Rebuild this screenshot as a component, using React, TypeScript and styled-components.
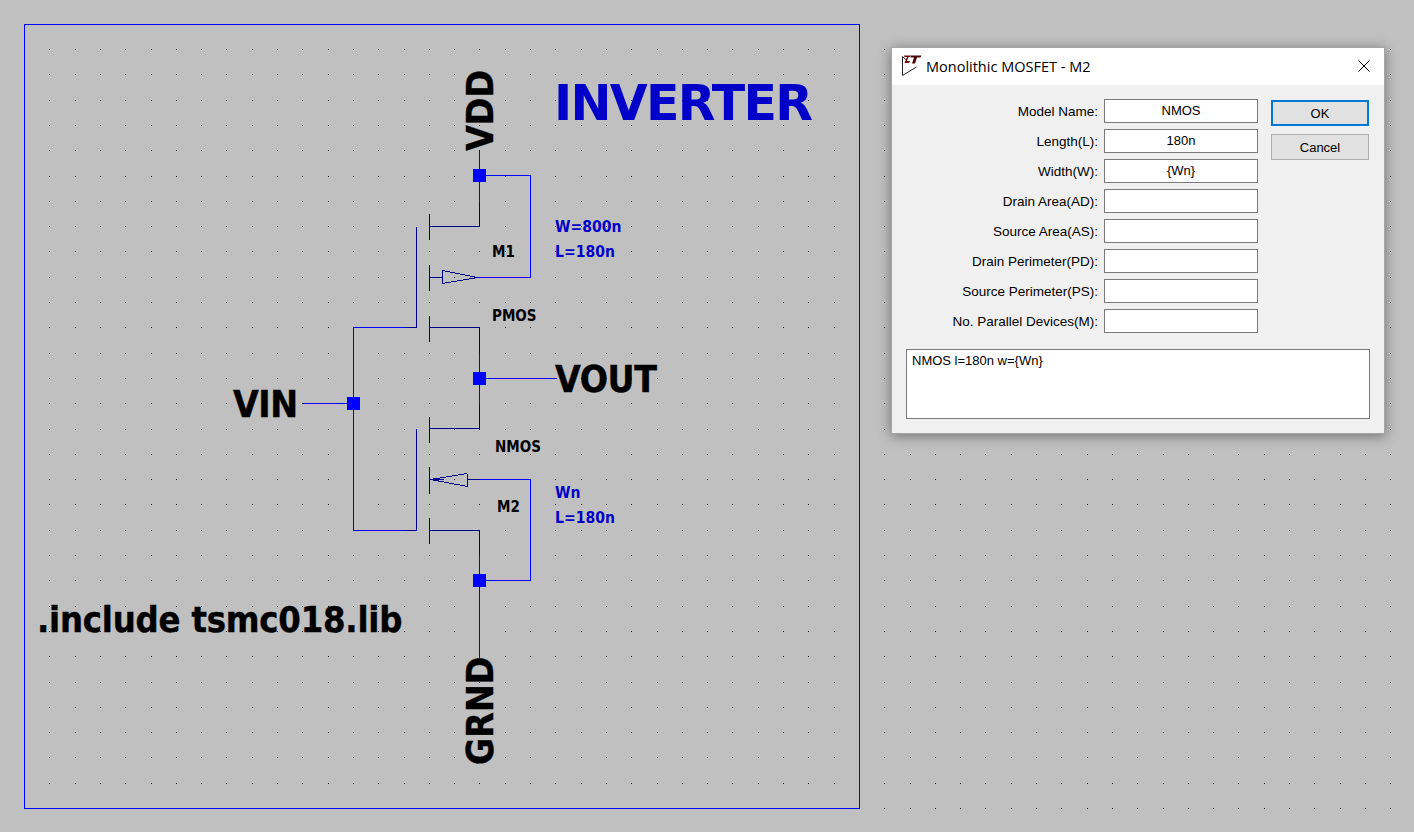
import React from "react";
import styled, { createGlobalStyle } from "styled-components";

const GlobalStyle = createGlobalStyle`
  html, body {
    margin: 0;
    padding: 0;
    background: #c0c0c0;
    overflow: hidden;
  }
`;

const Page = styled.div`
  position: relative;
  display: flex;
  align-items: flex-start;
  width: 1414px;
  height: 832px;
  padding: 24px 0 0 24px;
  box-sizing: border-box;
  background: #c0c0c0;
`;

const GridDots = styled.svg`
  position: absolute;
  left: 0;
  top: 0;
`;

const Frame = styled.div`
  position: relative;
  flex: none;
  width: 836px;
  height: 785px;
  box-sizing: border-box;
  border: 1px solid #0000ff;
`;

const Schematic = styled.svg`
  position: absolute;
  left: 0;
  top: 0;
`;

const CanvasText = styled.div<{ $x: number; $y: number }>`
  position: absolute;
  left: ${(p) => p.$x - 25}px;
  top: ${(p) => p.$y - 25}px;
  font-family: "DejaVu Sans", "Liberation Sans", sans-serif;
  font-weight: 700;
  font-stretch: condensed;
  white-space: nowrap;
  line-height: 1;
  color: #000;
`;

const NetLabel = styled(CanvasText)`
  font-size: 37px;
  letter-spacing: -0.4px;
  -webkit-text-stroke: 0.4px #000;
`;

const VerticalNetLabel = styled(NetLabel)`
  transform-origin: 0 0;
  transform: rotate(-90deg);
  letter-spacing: 0;
`;

const Title = styled(CanvasText)`
  font-size: 49px;
  font-stretch: normal;
  letter-spacing: -1.7px;
  color: #0000c8;
`;

const Directive = styled(CanvasText)`
  font-size: 36px;
  letter-spacing: -0.2px;
  -webkit-text-stroke: 0.4px #000;
`;

const RefText = styled(CanvasText)`
  font-size: 15px;
`;

const ValueText = styled(CanvasText)`
  font-size: 15.6px;
  color: #0000c8;
`;

const Dialog = styled.div`
  position: relative;
  flex: none;
  margin: 23px 0 0 31px;
  width: 494px;
  height: 387px;
  box-sizing: border-box;
  background: #f0f0f0;
  border: 1px solid #a6a6a6;
  box-shadow: 0 2px 12px rgba(0, 0, 0, 0.42);
  display: flex;
  flex-direction: column;
`;

const TitleBar = styled.div`
  flex: none;
  height: 37px;
  box-sizing: border-box;
  background: #fff;
  display: flex;
  align-items: center;
  padding: 0 14px 1px 9px;
  font-family: "Open Sans", "Noto Sans", sans-serif;
  font-size: 14.5px;
  color: #000;
`;

const TitleText = styled.span`
  margin-left: 3px;
  flex: 1;
`;

const Body = styled.div`
  flex: 1;
  padding: 14px 14px 14px 14px;
  display: flex;
  flex-direction: column;
  gap: 16px;
`;

const TopRow = styled.div`
  display: flex;
  align-items: flex-start;
  gap: 13px;
`;

const Fields = styled.div`
  display: grid;
  grid-template-columns: 1fr 154px;
  grid-auto-rows: 24px;
  row-gap: 6px;
  column-gap: 6px;
  width: 352px;
`;

const FieldLabel = styled.label`
  font-family: "Liberation Sans", Arial, sans-serif;
  font-size: 13.5px;
  line-height: 25px;
  text-align: right;
  color: #000;
  white-space: nowrap;
`;

const FieldInput = styled.input`
  width: 154px;
  height: 24px;
  box-sizing: border-box;
  border: 1px solid #7a7a7a;
  padding: 0 2px 2px;
  margin: 0;
  outline: none;
  border-radius: 0;
  background: #fff;
  text-align: center;
  font-family: "Liberation Sans", Arial, sans-serif;
  font-size: 13px;
  color: #000;
`;

const Buttons = styled.div`
  display: flex;
  flex-direction: column;
  gap: 8px;
  margin-top: 1px;
`;

const DialogButton = styled.button<{ $primary?: boolean }>`
  width: 98px;
  height: 26px;
  box-sizing: border-box;
  margin: 0;
  padding: 0;
  border-radius: 0;
  outline: none;
  background: #e1e1e1;
  border: ${(p) => (p.$primary ? "2px solid #0078d7" : "1px solid #adadad")};
  font-family: "Liberation Sans", Arial, sans-serif;
  font-size: 13px;
  color: #000;
`;

const SpiceLine = styled.textarea`
  display: block;
  width: 464px;
  height: 70px;
  box-sizing: border-box;
  margin: 0;
  padding: 3px 5px;
  border: 1px solid #7a7a7a;
  border-radius: 0;
  outline: none;
  resize: none;
  overflow: hidden;
  background: #fff;
  font-family: "Liberation Sans", Arial, sans-serif;
  font-size: 13px;
  line-height: 15px;
  color: #000;
`;

const fields: [string, string][] = [
  ["Model Name:", "NMOS"],
  ["Length(L):", "180n"],
  ["Width(W):", "{Wn}"],
  ["Drain Area(AD):", ""],
  ["Source Area(AS):", ""],
  ["Drain Perimeter(PD):", ""],
  ["Source Perimeter(PS):", ""],
  ["No. Parallel Devices(M):", ""],
];

// grid dots sit on a 25.3px pitch, snapped to whole pixels
const dotPath = () => {
  let d = "";
  for (let j = 0; j <= 30; j++) {
    for (let i = 0; i <= 53; i++) {
      const x = Math.round(49.3 + i * 25.3);
      const y = Math.round(49 + j * 25.3);
      d += `M${x} ${y}h1v1h-1z`;
    }
  }
  return d;
};

const WIRE = "#0000ff";
const SYMBOL = "#000090";

const wires = [
  "M479 150V201",
  "M479 175H530V277H477",
  "M479 352V403",
  "M479 378H556",
  "M302 403H353",
  "M353 327V530H404",
  "M353 327H404",
  "M479 555V657",
  "M479 580H530V479H479",
];

const symbols = [
  // PMOS
  "M479 201V226H429",
  "M429 213V239",
  "M429 264V290",
  "M429 315V341",
  "M416 226V327H404",
  "M429 327H479V352",
  "M429 277H442",
  "M442 270V283L477 277L442 270",
  // NMOS
  "M479 403V428H429",
  "M429 416V442",
  "M429 466V493",
  "M429 517V543",
  "M416 428V530H404",
  "M429 530H479V555",
  "M479 479H467",
  "M467 473V486L430 479L467 473",
  "M430 479H443",
];

const junctions: [number, number][] = [
  [479, 175],
  [479, 378],
  [353, 403],
  [479, 580],
];

const LtLogo = () => (
  <svg width="22" height="24" viewBox="0 0 22 24">
    <path d="M1.5 2.5V21.5L15.5 13" fill="none" stroke="#222" strokeWidth="1" />
    <path d="M1.5 2.5L6 6.5" fill="none" stroke="#222" strokeWidth="1" />
    <path d="M3 1.5h7l-1 1.5h-1.5l-1.5 4h3l-1 2H3.5l2.5-6H3.5z" fill="#6e0a0a" />
    <path d="M10 1.5h10.5l-1 2H16l-2 6h-3l2-6h-3.5z" fill="#4a0606" />
  </svg>
);

const CloseIcon = () => (
  <svg width="12" height="12" viewBox="0 0 12 12">
    <path d="M0.5 0.5L11.5 11.5M11.5 0.5L0.5 11.5" stroke="#000" strokeWidth="1" />
  </svg>
);

export default function App() {
  return (
    <>
      <GlobalStyle />
      <Page>
        <GridDots width="1414" height="832" viewBox="0 0 1414 832" shapeRendering="crispEdges">
          <path d={dotPath()} fill="#000" />
        </GridDots>
        <Frame>
          <Schematic width="834" height="783" viewBox="25 25 834 783" shapeRendering="crispEdges">
            <g transform="translate(0.5 0.5)" fill="none">
              {symbols.map((d) => (
                <path key={d} d={d} stroke={SYMBOL} />
              ))}
              {wires.map((d) => (
                <path key={d} d={d} stroke={WIRE} />
              ))}
            </g>
            {junctions.map(([x, y]) => (
              <rect key={`${x}-${y}`} x={x - 6} y={y - 6} width="13" height="13" fill={WIRE} />
            ))}
          </Schematic>
          <Title $x={554} $y={79}>INVERTER</Title>
          <VerticalNetLabel $x={462} $y={151}>VDD</VerticalNetLabel>
          <VerticalNetLabel $x={462} $y={765}>GRND</VerticalNetLabel>
          <NetLabel $x={233} $y={386}>VIN</NetLabel>
          <NetLabel $x={555} $y={361}>VOUT</NetLabel>
          <Directive $x={37} $y={602}>.include tsmc018.lib</Directive>
          <RefText $x={492} $y={245}>M1</RefText>
          <RefText $x={492} $y={309}>PMOS</RefText>
          <RefText $x={495} $y={440}>NMOS</RefText>
          <RefText $x={497} $y={500}>M2</RefText>
          <ValueText $x={555} $y={220}>W=800n</ValueText>
          <ValueText $x={555} $y={245}>L=180n</ValueText>
          <ValueText $x={555} $y={486}>Wn</ValueText>
          <ValueText $x={555} $y={511}>L=180n</ValueText>
        </Frame>
        <Dialog>
          <TitleBar>
            <LtLogo />
            <TitleText>Monolithic MOSFET - M2</TitleText>
            <CloseIcon />
          </TitleBar>
          <Body>
            <TopRow>
              <Fields>
                {fields.map(([label, value]) => (
                  <React.Fragment key={label}>
                    <FieldLabel>{label}</FieldLabel>
                    <FieldInput readOnly defaultValue={value} />
                  </React.Fragment>
                ))}
              </Fields>
              <Buttons>
                <DialogButton $primary>OK</DialogButton>
                <DialogButton>Cancel</DialogButton>
              </Buttons>
            </TopRow>
            <SpiceLine readOnly defaultValue="NMOS l=180n w={Wn}" />
          </Body>
        </Dialog>
      </Page>
    </>
  );
}
